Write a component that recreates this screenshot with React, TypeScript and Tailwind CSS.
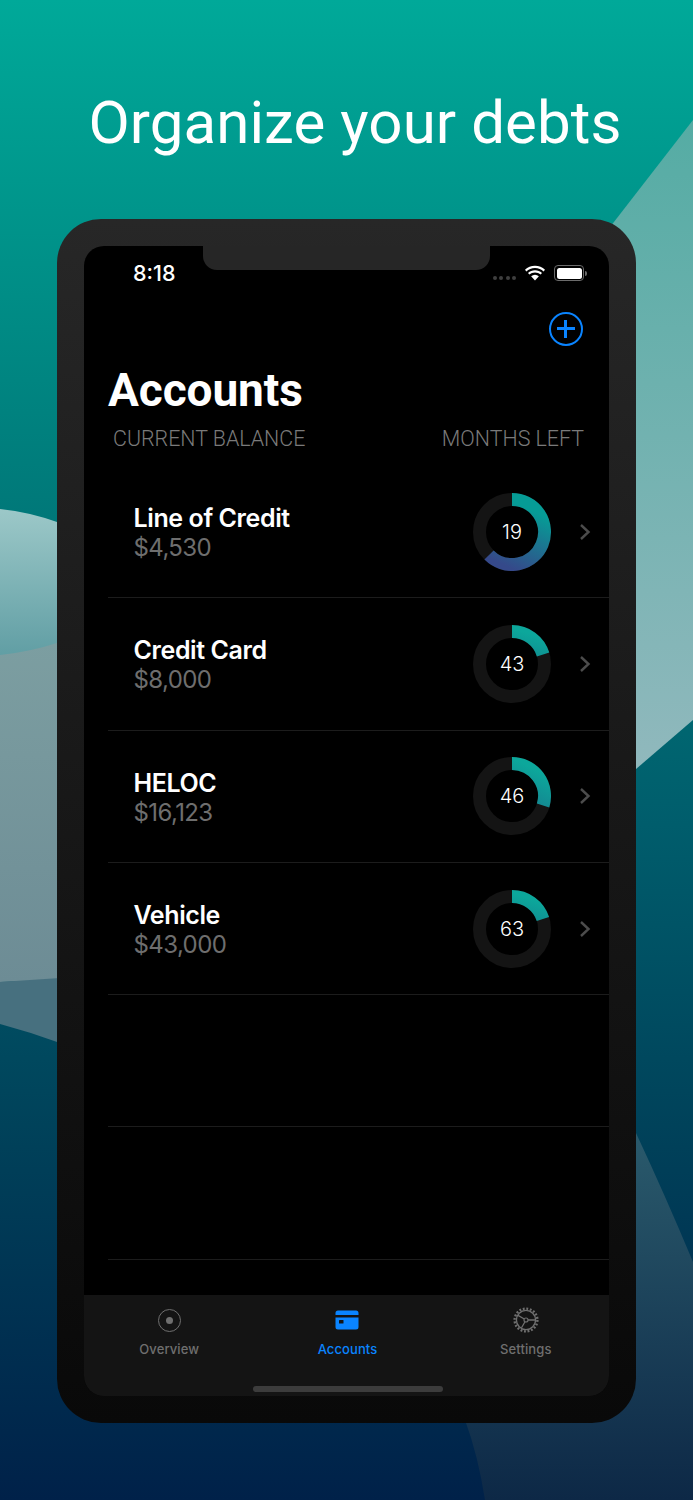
import { useId } from 'react'

const accounts = [
  { name: 'Line of Credit', balance: '$4,530', months: 19, angle: 225, from: '#069c96', to: '#35498a' },
  { name: 'Credit Card', balance: '$8,000', months: 43, angle: 73, from: '#0ca79b', to: '#108f92' },
  { name: 'HELOC', balance: '$16,123', months: 46, angle: 107, from: '#0ca79b', to: '#16808f' },
  { name: 'Vehicle', balance: '$43,000', months: 63, angle: 72, from: '#0ca79b', to: '#108f92' },
]

function Backdrop() {
  return (
    <svg className="absolute inset-0" width="693" height="1500" viewBox="0 0 693 1500">
      <defs>
        <linearGradient id="bg" x1="0" y1="0" x2="0" y2="1">
          <stop offset="0" stopColor="#00a999" />
          <stop offset="0.12" stopColor="#00988d" />
          <stop offset="0.33" stopColor="#007a7a" />
          <stop offset="0.55" stopColor="#005d6c" />
          <stop offset="0.75" stopColor="#00425a" />
          <stop offset="1" stopColor="#002149" />
        </linearGradient>
        <linearGradient id="shapeRight" x1="0" y1="0" x2="0" y2="1">
          <stop offset="0" stopColor="#55aca4" />
          <stop offset="1" stopColor="#93b9be" />
        </linearGradient>
        <linearGradient id="shapeLeft" x1="0" y1="0" x2="0" y2="1">
          <stop offset="0" stopColor="#9cc8c8" />
          <stop offset="1" stopColor="#5f9da3" />
        </linearGradient>
        <linearGradient id="shapeGrey" x1="0" y1="0" x2="0" y2="1">
          <stop offset="0" stopColor="#7c9ea1" />
          <stop offset="1" stopColor="#6d8c95" />
        </linearGradient>
        <linearGradient id="shapeBottom" x1="0" y1="0" x2="0" y2="1">
          <stop offset="0" stopColor="#2a5a6c" />
          <stop offset="1" stopColor="#0d2846" />
        </linearGradient>
      </defs>
      <rect width="693" height="1500" fill="url(#bg)" />
      <path d="M693 120 L600 240 L600 800 L693 720 Z" fill="url(#shapeRight)" />
      <path d="M0 509 Q30 512 60 523 L60 660 L0 655 Z" fill="url(#shapeLeft)" />
      <path d="M0 655 Q30 652 60 642 L60 980 L0 982 Z" fill="url(#shapeGrey)" />
      <path d="M0 982 L60 978 L60 1043 Q30 1032 0 1024 Z" fill="#47707f" />
      <path d="M636 1133 Q665 1195 693 1262 L693 1500 L485 1500 Q478 1455 465 1420 Z" fill="url(#shapeBottom)" />
    </svg>
  )
}

function Ring({ months, angle, from, to }: { months: number; angle: number; from: string; to: string }) {
  const id = useId()
  const r = 32.5
  const rad = (angle * Math.PI) / 180
  const x = 39 + r * Math.sin(rad)
  const y = 39 - r * Math.cos(rad)
  return (
    <div className="relative w-[78px] h-[78px] shrink-0">
      <svg width="78" height="78" viewBox="0 0 78 78">
        <defs>
          <linearGradient id={id} x1="0.6" y1="0.1" x2="0.25" y2="1">
            <stop offset="0" stopColor={from} />
            <stop offset="1" stopColor={to} />
          </linearGradient>
        </defs>
        <circle cx="39" cy="39" r={r} fill="none" stroke="#141414" strokeWidth="13" />
        <path
          d={`M39 6.5 A${r} ${r} 0 ${angle > 180 ? 1 : 0} 1 ${x} ${y}`}
          fill="none"
          stroke={`url(#${id})`}
          strokeWidth="13"
        />
      </svg>
      <div className="absolute inset-0 flex items-center justify-center text-[20px] font-[350] text-white font-['Inter',sans-serif]">
        {months}
      </div>
    </div>
  )
}

function AccountRow({ a }: { a: (typeof accounts)[number] }) {
  return (
    <div className="h-[132.3px] shrink-0 flex items-center border-b border-[#1c1c1c] pl-[25.5px]">
      <div className="flex-1 flex flex-col pt-[2px]">
        <span className="text-[25px] leading-[30px] font-semibold text-white tracking-[-0.4px]">{a.name}</span>
        <span className="text-[24px] leading-[29px] text-[#6e6e6e] tracking-[-0.6px]">{a.balance}</span>
      </div>
      <Ring months={a.months} angle={a.angle} from={a.from} to={a.to} />
      <svg className="ml-[28px] mr-[18px]" width="12" height="18" viewBox="0 0 12 18">
        <path d="M2 2 L9.5 9 L2 16" fill="none" stroke="#4c4c4c" strokeWidth="2.4" />
      </svg>
    </div>
  )
}

function StatusIcons() {
  return (
    <div className="flex items-center">
      <div className="flex gap-[2.5px] mt-[10px] mr-[9px]">
        {[0, 1, 2, 3].map(i => (
          <span key={i} className="w-[4px] h-[4px] rounded-full bg-[#3f3f3f]" />
        ))}
      </div>
      <svg width="20" height="16" viewBox="0 0 20 16" fill="#fff">
        <path d="M10 3 C13.4 3 16.4 4.3 18.6 6.4 L20 4.8 C17.4 2.2 13.9 0.7 10 0.7 C6.1 0.7 2.6 2.2 0 4.8 L1.4 6.4 C3.6 4.3 6.6 3 10 3 Z" />
        <path d="M10 7.4 C12.2 7.4 14.1 8.2 15.6 9.6 L17 8 C15.1 6.2 12.7 5.2 10 5.2 C7.3 5.2 4.9 6.2 3 8 L4.4 9.6 C5.9 8.2 7.8 7.4 10 7.4 Z" />
        <path d="M10 9.8 C8.6 9.8 7.3 10.3 6.1 11.3 L10 15.4 L13.9 11.3 C12.7 10.3 11.4 9.8 10 9.8 Z" />
      </svg>
      <div className="ml-[9px] w-[30px] h-[16px] rounded-[4px] border border-[#6b6b6b] p-[1.5px]">
        <div className="w-full h-full rounded-[2.5px] bg-white" />
      </div>
      <div className="w-[2px] h-[5px] ml-[1px] rounded-r-full bg-[#6b6b6b]" />
    </div>
  )
}

function Gear() {
  return (
    <svg width="26" height="26" viewBox="0 0 26 26" fill="none" stroke="#6f6f6f">
      <circle cx="13" cy="13" r="11.4" strokeWidth="2.4" strokeDasharray="1.9 1.68" />
      <circle cx="13" cy="13" r="9.6" strokeWidth="1.4" />
      <circle cx="13" cy="13" r="2" strokeWidth="1.2" />
      <path d="M11.3 12 L5 8.4 M15 13 L22 13 M12 14.7 L8.5 20.8" strokeWidth="1.3" />
    </svg>
  )
}

export default function App() {
  return (
    <div className="relative w-[693px] h-[1500px] overflow-hidden font-['Inter',sans-serif]">
      <Backdrop />
      <div className="relative flex flex-col items-center">
        <h1 className="mt-[84px] h-[78px] pl-[17px] text-[60px] leading-[78px] font-normal text-white font-['Roboto',sans-serif] tracking-[0.08px]">
          Organize your debts
        </h1>
        <div className="mt-[57px] w-[579px] h-[1204px] rounded-[44px] p-[27px] bg-gradient-to-b from-[#272727] to-[#090909]">
          <div className="relative w-[525px] h-[1150px] rounded-[20px] overflow-hidden bg-black flex flex-col">
            <div className="absolute top-0 left-[119px] w-[287px] h-[24px] rounded-b-[14px] bg-[#262626]" />
            <div className="h-[54px] shrink-0 flex items-center justify-between pl-[49px] pr-[22px]">
              <span className="text-[21.5px] mt-[1px] font-medium text-white">8:18</span>
              <StatusIcons />
            </div>
            <div className="h-[58px] shrink-0 flex justify-end items-start pt-[12px] pr-[26px]">
              <div className="relative w-[34px] h-[34px] rounded-full border-[2.5px] border-[#0a84ff]">
                <span className="absolute left-[6px] right-[6px] top-[13px] h-[3px] bg-[#0a84ff]" />
                <span className="absolute top-[6px] bottom-[6px] left-[13px] w-[3px] bg-[#0a84ff]" />
              </div>
            </div>
            <div className="pl-[24px] flex-1 flex flex-col min-h-0">
              <h2 className="h-[61px] pt-[3px] text-[46px] leading-[58px] font-bold text-white font-['Roboto',sans-serif] tracking-[-0.1px]">Accounts</h2>
              <div className="h-[40px] flex justify-between items-center pl-[5px] pr-[25px] text-[21.4px] text-[#7a7a7a] font-['Roboto',sans-serif] font-light">
                <span>CURRENT BALANCE</span>
                <span>MONTHS LEFT</span>
              </div>
              <div className="h-[7px] shrink-0" />
              {accounts.map(a => (
                <AccountRow key={a.name} a={a} />
              ))}
              <div className="h-[132.3px] shrink-0 border-b border-[#1c1c1c]" />
              <div className="h-[132.3px] shrink-0 border-b border-[#1c1c1c]" />
            </div>
            <div className="relative h-[101px] shrink-0 bg-[#141414]">
              <div className="grid grid-cols-3 -ml-[4px] -mr-[6px] pt-[12px] text-[13px] font-medium tracking-[0.1px]">
                <div className="flex flex-col items-center gap-[7px] text-[#6f6f6f]">
                  <div className="h-[26px] flex items-center">
                    <div className="w-[23px] h-[23px] rounded-full border-[1.5px] border-[#6f6f6f] flex items-center justify-center">
                      <div className="w-[7px] h-[7px] rounded-full bg-[#6f6f6f]" />
                    </div>
                  </div>
                  <span>Overview</span>
                </div>
                <div className="flex flex-col items-center gap-[7px] text-[#0a84ff]">
                  <div className="h-[26px] flex items-center">
                    <svg width="24" height="20" viewBox="0 0 24 20">
                      <path d="M3 0.5 H21 A2.5 2.5 0 0 1 23.5 3 V5 H0.5 V3 A2.5 2.5 0 0 1 3 0.5 Z" fill="#0a84ff" />
                      <path d="M0.5 7.5 H23.5 V17 A2.5 2.5 0 0 1 21 19.5 H3 A2.5 2.5 0 0 1 0.5 17 Z" fill="#0a84ff" />
                      <rect x="4" y="10" width="4.5" height="3.6" rx="0.6" fill="#141414" />
                    </svg>
                  </div>
                  <span>Accounts</span>
                </div>
                <div className="flex flex-col items-center gap-[7px] text-[#6f6f6f]">
                  <Gear />
                  <span>Settings</span>
                </div>
              </div>
              <div className="absolute left-[169px] bottom-[4px] w-[190px] h-[6px] rounded-full bg-[#3c3c3c]" />
            </div>
          </div>
        </div>
      </div>
    </div>
  )
}
